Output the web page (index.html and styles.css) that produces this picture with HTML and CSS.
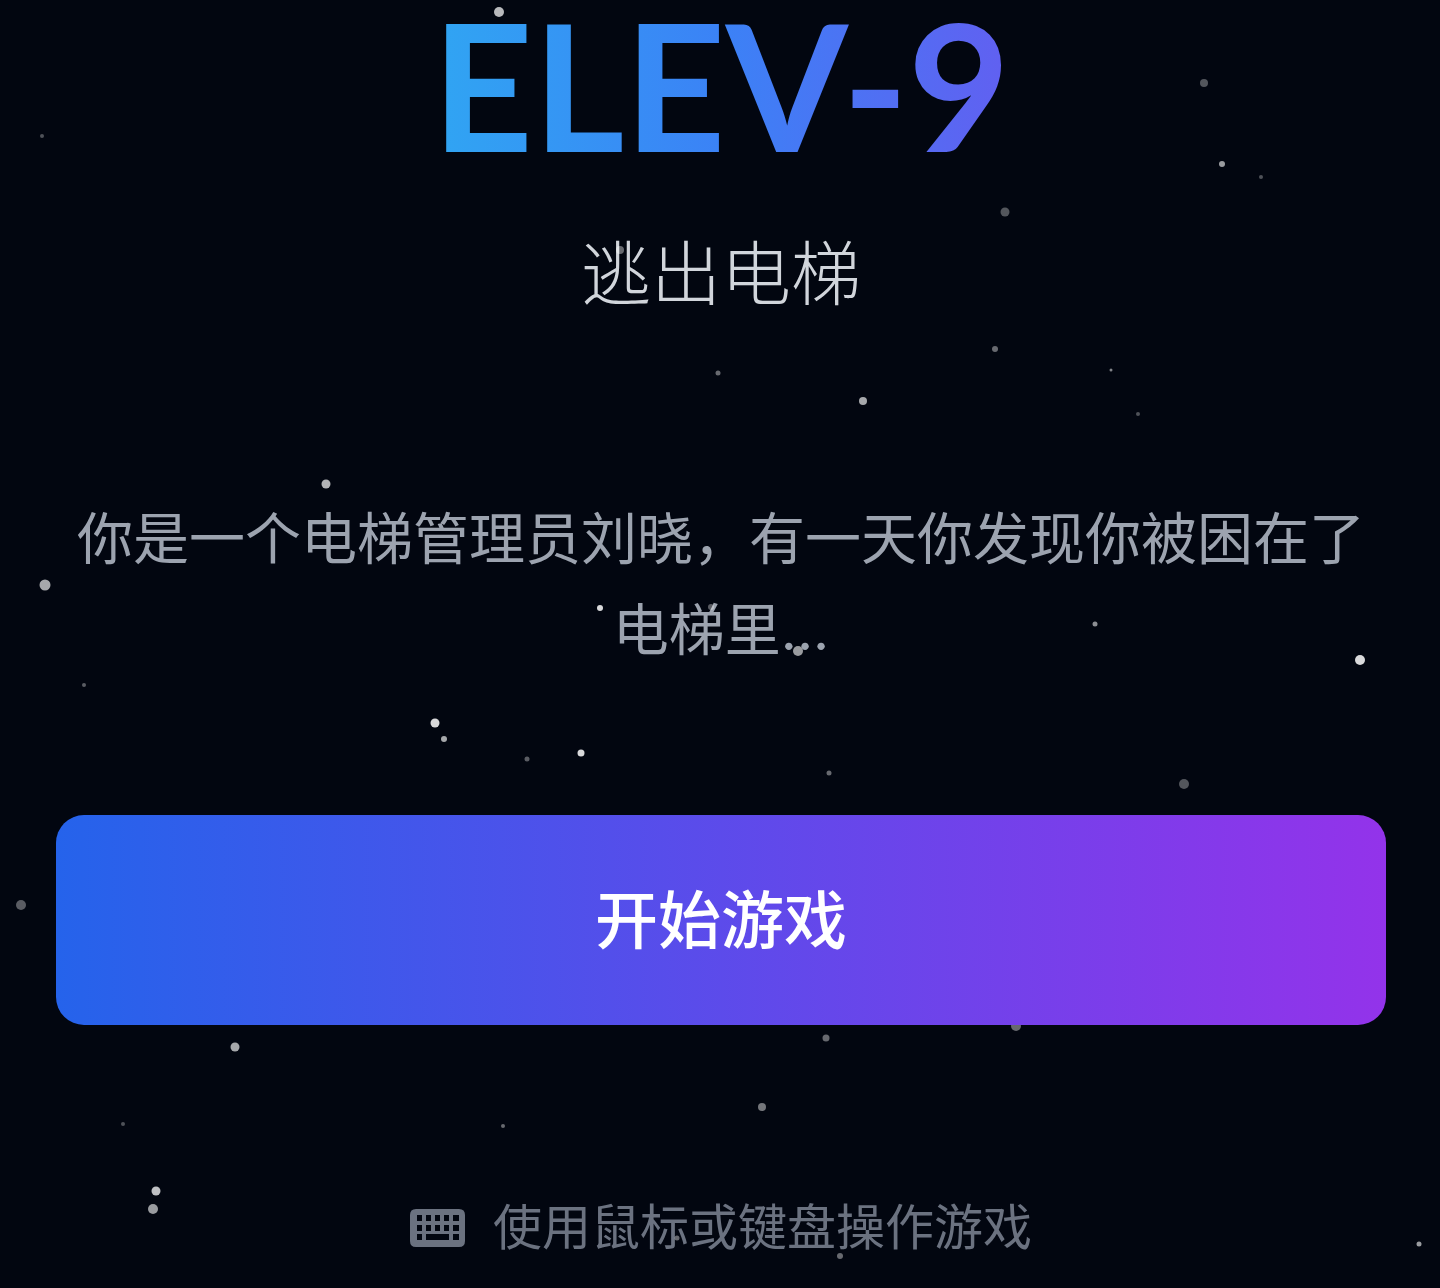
FILE: index.html
```
<!DOCTYPE html>
<html lang="zh-CN">
<head>
    <meta charset="UTF-8">
    <meta name="viewport" content="width=device-width, initial-scale=1.0">
    <title>ELEV-9 逃出电梯</title>
    <link rel="stylesheet" href="styles.css">
</head>
<body>
    <svg class="stars" viewBox="0 0 1440 1288" preserveAspectRatio="xMidYMin slice" aria-hidden="true">
        <circle cx="499" cy="12" r="5" opacity=".72"/>
        <circle cx="1204" cy="83" r="4" opacity=".32"/>
        <circle cx="42" cy="136" r="2" opacity=".3"/>
        <circle cx="1222" cy="164" r="3" opacity=".6"/>
        <circle cx="1261" cy="177" r="2" opacity=".3"/>
        <circle cx="1005" cy="212" r="4.5" opacity=".32"/>
        <circle cx="620" cy="250" r="4" opacity=".4"/>
        <circle cx="995" cy="349" r="3" opacity=".4"/>
        <circle cx="1111" cy="370" r="1.5" opacity=".5"/>
        <circle cx="718" cy="373" r="2.5" opacity=".4"/>
        <circle cx="863" cy="401" r="4" opacity=".65"/>
        <circle cx="1138" cy="414" r="2" opacity=".3"/>
        <circle cx="326" cy="484" r="4.5" opacity=".7"/>
        <circle cx="45" cy="585" r="5.5" opacity=".65"/>
        <circle cx="600" cy="608" r="3" opacity=".85"/>
        <circle cx="711" cy="607" r="3" opacity=".35"/>
        <circle cx="1095" cy="624" r="2.5" opacity=".55"/>
        <circle cx="798" cy="651" r="5" opacity=".6"/>
        <circle cx="1360" cy="660" r="5" opacity=".85"/>
        <circle cx="84" cy="685" r="2" opacity=".35"/>
        <circle cx="435" cy="723" r="4.5" opacity=".85"/>
        <circle cx="444" cy="739" r="3" opacity=".65"/>
        <circle cx="581" cy="753" r="3.5" opacity=".85"/>
        <circle cx="527" cy="759" r="2.5" opacity=".35"/>
        <circle cx="829" cy="773" r="2.5" opacity=".4"/>
        <circle cx="1184" cy="784" r="5" opacity=".32"/>
        <circle cx="21" cy="905" r="5" opacity=".35"/>
        <circle cx="1016" cy="1026" r="5" opacity=".4"/>
        <circle cx="826" cy="1038" r="3.5" opacity=".4"/>
        <circle cx="235" cy="1047" r="4.5" opacity=".65"/>
        <circle cx="762" cy="1107" r="4" opacity=".45"/>
        <circle cx="123" cy="1124" r="2" opacity=".3"/>
        <circle cx="503" cy="1126" r="2" opacity=".4"/>
        <circle cx="156" cy="1191" r="4.5" opacity=".75"/>
        <circle cx="153" cy="1209" r="5" opacity=".6"/>
        <circle cx="677" cy="1238" r="2.5" opacity=".4"/>
        <circle cx="1419" cy="1244" r="2.5" opacity=".6"/>
        <circle cx="840" cy="1256" r="3" opacity=".4"/>
    </svg>

    <main class="start-screen">
        <h1 class="title">ELEV-9</h1>
        <h2 class="subtitle">逃出电梯</h2>
        <p class="story">你是一个电梯管理员刘晓，有一天你发现你被困在了电梯里...</p>
        <button type="button" class="start-btn">开始游戏</button>
        <p class="hint">
            <svg class="keyboard" viewBox="0 0 55 38" aria-hidden="true">
                <path fill-rule="evenodd" d="M6 0H49Q55 0 55 6V32Q55 38 49 38H6Q0 38 0 32V6Q0 0 6 0Z
                    M7 6h5v6h-5z M16 6h5v6h-5z M25 6h5v6h-5z M34 6h5v6h-5z M43 6h6v6h-6z
                    M7 16h5v6h-5z M16 16h5v6h-5z M25 16h5v6h-5z M34 16h5v6h-5z M43 16h6v6h-6z
                    M7 25h5v6h-5z M16 25h23v6h-23z M43 25h6v6h-6z"/>
            </svg>
            <span>使用鼠标或键盘操作游戏</span>
        </p>
    </main>
</body>
</html>
```
FILE: styles.css
```
* {
    box-sizing: border-box;
    margin: 0;
    padding: 0;
}

body {
    position: relative;
    min-height: 100vh;
    background-color: #020610;
    font-family: Inter, "Noto Sans CJK SC", sans-serif;
    text-align: center;
    overflow: hidden;
}

.stars {
    position: absolute;
    top: 0;
    left: 0;
    width: 100%;
    height: 100%;
    fill: #fff;
}

.start-screen {
    display: flex;
    flex-direction: column;
    padding: 0 54px 20px 56px;
}

.title {
    font-family: Lato, sans-serif;
    font-size: 176px;
    font-weight: 700;
    line-height: 168px;
    background: linear-gradient(to right, #22d3ee, #3b82f6, #9333ea);
    -webkit-background-clip: text;
    background-clip: text;
    color: transparent;
}

.subtitle {
    margin-top: 52px;
    font-family: "Noto Sans CJK SC", sans-serif;
    font-size: 70px;
    font-weight: 300;
    line-height: 100px;
    color: #d1d5db;
}

.story {
    margin-top: 174px;
    font-size: 56px;
    line-height: 91px;
    color: #9ca3af;
}

.start-btn {
    position: relative;
    margin-top: 139px;
    padding: 56px;
    border: none;
    border-radius: 28px;
    background: linear-gradient(to right, #2563eb, #9333ea);
    color: #fff;
    font-family: inherit;
    font-size: 63px;
    font-weight: 500;
    line-height: 98px;
    cursor: pointer;
}

.hint {
    display: flex;
    justify-content: center;
    align-items: center;
    gap: 28px;
    margin-top: 168px;
    font-size: 49px;
    line-height: 70px;
    color: #6b7280;
}

.keyboard {
    width: 55px;
    height: 38px;
    fill: currentColor;
}
```
